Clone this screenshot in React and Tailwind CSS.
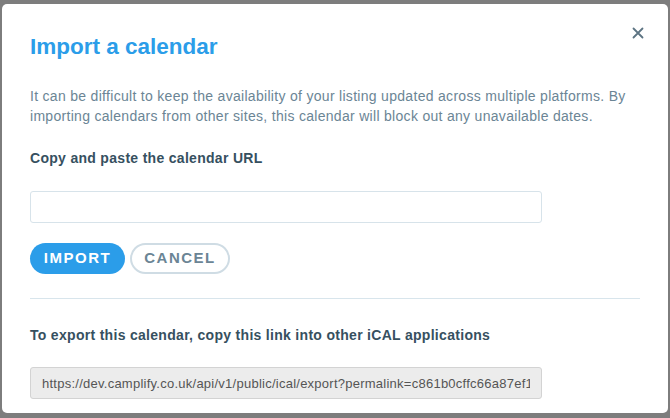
import React from "react";

const App = () => {
  return (
    <div
      className="w-[670px] h-[418px] bg-[#7d7d7d] pt-[4px] pl-[2px] overflow-hidden"
      style={{ fontFamily: '"Liberation Sans", Arial, sans-serif' }}
    >
      <div className="relative w-[666px] h-[409px] bg-white rounded-[5px] px-[28px] pt-[28px]">
        {/* close */}
        <button className="absolute top-[23px] right-[24px] text-[#5d7483]">
          <svg width="12" height="12" viewBox="0 0 12 12">
            <path d="M1.5 1.5 L10.5 10.5 M10.5 1.5 L1.5 10.5" stroke="currentColor" strokeWidth="1.8" strokeLinecap="round" />
          </svg>
        </button>

        <h1 className="text-[22.5px] leading-[30px] font-bold text-[#2b9de9]">Import a calendar</h1>

        <p className="mt-[24px] text-[14px] leading-[20px] tracking-[0.3px] text-[#6b8595]">
          It can be difficult to keep the availability of your listing updated across multiple platforms. By importing calendars from other sites, this calendar will block out any unavailable dates.
        </p>

        <h2 className="mt-[22px] text-[14px] leading-[20px] tracking-[0.3px] font-bold text-[#36505f]">Copy and paste the calendar URL</h2>

        <input
          type="text"
          className="block mt-[23px] w-[512px] h-[32px] border border-[#d7e3ea] rounded-[3px] outline-none px-2"
        />

        <div className="flex gap-[5px] mt-[20px]">
          <button className="h-[31px] w-[95px] rounded-full bg-[#2b9de9] text-white text-[15px] font-bold tracking-[1.5px]">
            IMPORT
          </button>
          <button className="h-[31px] w-[100px] rounded-full border-2 border-[#cfdce4] text-[#6b8595] text-[15px] font-bold tracking-[1.5px]">
            CANCEL
          </button>
        </div>

        <div className="mt-[24px] h-px bg-[#d8e5ec]" />

        <h2 className="mt-[26px] text-[14px] leading-[20px] tracking-[0.3px] font-bold text-[#36505f]">
          To export this calendar, copy this link into other iCAL applications
        </h2>

        <input
          type="text"
          readOnly
          value="https://dev.camplify.co.uk/api/v1/public/ical/export?permalink=c861b0cffc66a87ef13b2d"
          className="block mt-[22px] w-[512px] h-[32px] border border-[#d3d3d3] rounded-[3px] bg-[#ececec] px-[11px] outline-none text-[13px] tracking-[0.25px] text-[#555]"
        />
      </div>
    </div>
  );
};

export default App;
